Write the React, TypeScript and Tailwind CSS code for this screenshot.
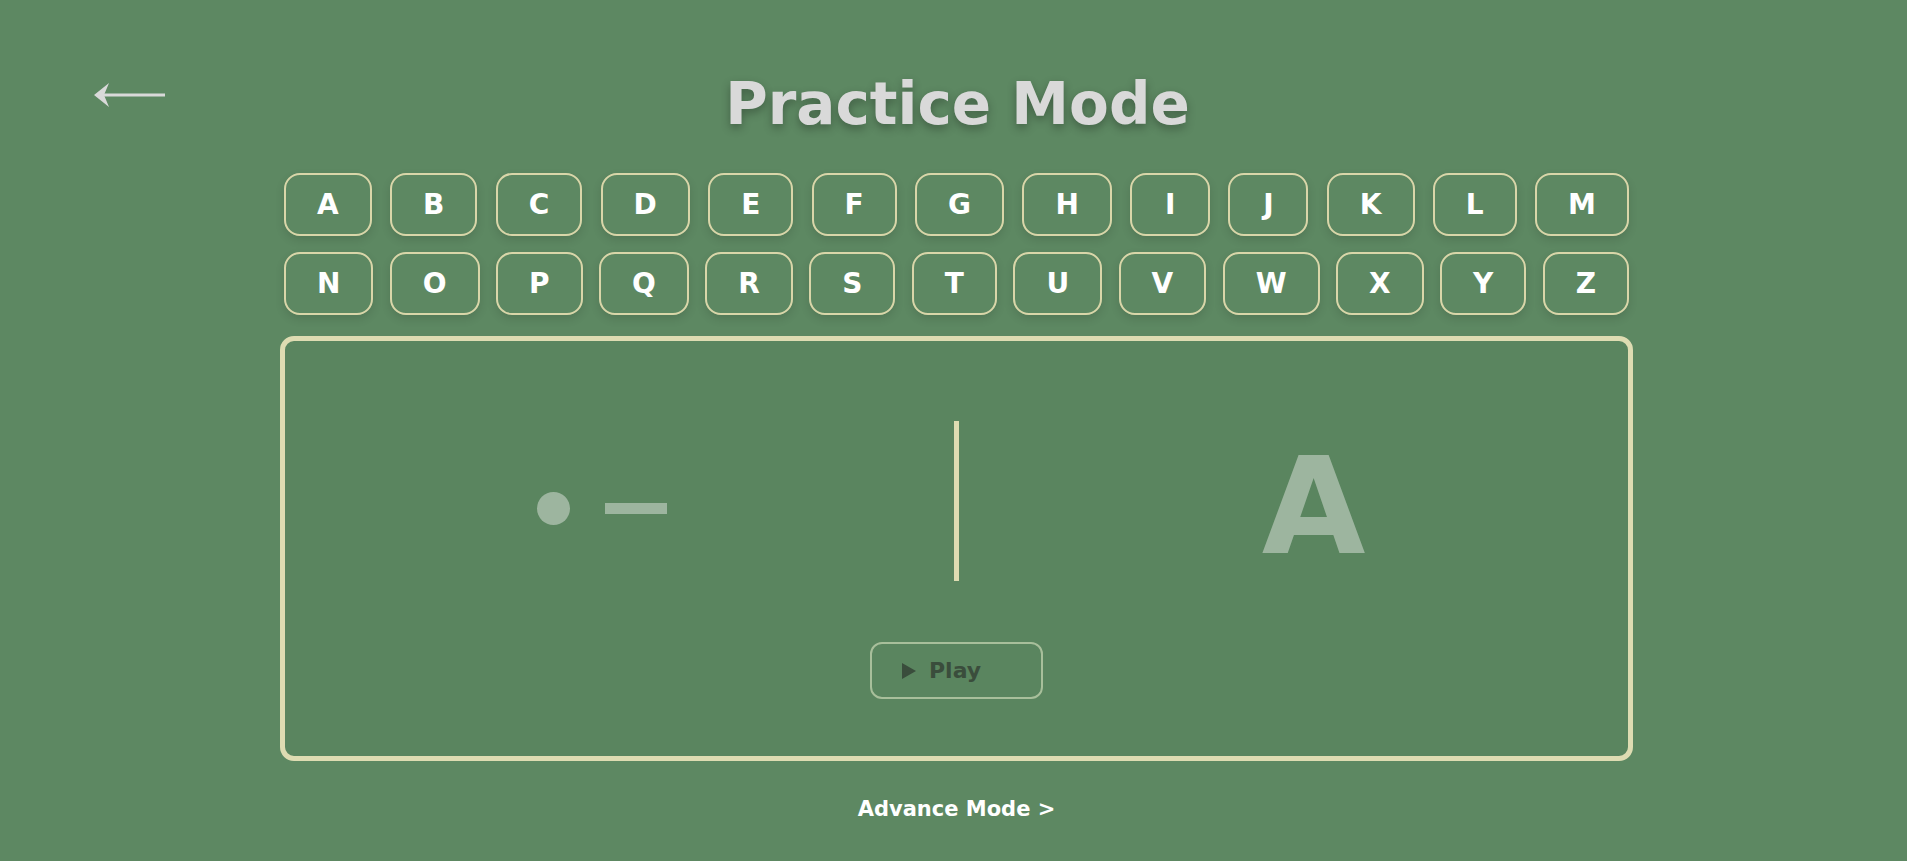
const ROW1 = ["A", "B", "C", "D", "E", "F", "G", "H", "I", "J", "K", "L", "M"];
const ROW2 = ["N", "O", "P", "Q", "R", "S", "T", "U", "V", "W", "X", "Y", "Z"];

function LetterKey({ letter }: { letter: string }) {
  return (
    <button className="h-[63px] min-w-[80px] px-[31px] flex items-center justify-center rounded-[16px] border-2 border-[#d9d6a9] text-white text-[28px] font-bold leading-none shadow-[0_4px_10px_rgba(0,0,0,0.12)]">
      {letter}
    </button>
  );
}

export default function App() {
  return (
    <div
      className="min-h-screen bg-[#5d8862] pb-10"
      style={{ fontFamily: '"DejaVu Sans", "Noto Sans", sans-serif' }}
    >
      {/* header */}
      <div className="grid grid-cols-[1fr_auto_1fr] pt-[75px]">
        <div className="pl-[94px] pt-[7px]">
          <svg width="72" height="26" viewBox="0 0 72 26" fill="none">
            <path d="M4 13 H71" stroke="#d9d9d9" strokeWidth="3" />
            <path d="M0 13 L15 1 L10 13 L15 25 Z" fill="#d9d9d9" />
          </svg>
        </div>
        <h1 className="translate-x-[4px] text-[58px] leading-none font-bold text-[#d9d9d9] [text-shadow:0_4px_10px_rgba(0,0,0,0.3)]">
          Practice Mode
        </h1>
        <div />
      </div>

      <div className="mx-auto w-[1353px] translate-x-[3px] mt-[40px]">
        {/* letter keys */}
        <div className="px-[4px] space-y-[16px]">
          <div className="flex justify-between">
            {ROW1.map((l) => (
              <LetterKey key={l} letter={l} />
            ))}
          </div>
          <div className="flex justify-between">
            {ROW2.map((l) => (
              <LetterKey key={l} letter={l} />
            ))}
          </div>
        </div>

        {/* practice card */}
        <div className="mt-[21px] h-[425px] rounded-[14px] border-[5px] border-[#dedcb2] bg-[#5a855f] flex flex-col items-center pt-[80px]">
          <div className="w-full flex items-center">
            <div className="flex-1 flex items-center justify-center gap-[35px] pl-[2px] pr-[38px] pt-[14px]">
              <span className="w-[33px] h-[33px] rounded-full bg-[#9db59f]" />
              <span className="w-[62px] h-[11px] bg-[#9db59f]" />
            </div>
            <div className="w-[5px] h-[160px] bg-[#dedcb2]" />
            <div className="flex-1 flex items-center justify-center pl-[40px] pt-[12px]">
              <span className="text-[134px] leading-none font-bold text-[#9db59f]">A</span>
            </div>
          </div>

          <button className="mt-[61px] w-[173px] h-[57px] rounded-[12px] border-2 border-[#a8bf9b] flex items-center pl-[30px] gap-[13px] text-[#3a4d3c] text-[22px] font-bold">
            <svg width="14" height="16" viewBox="0 0 14 16">
              <polygon points="0,0 14,8 0,16" fill="#3a4d3c" />
            </svg>
            Play
          </button>
        </div>

        <div className="mt-[38px] text-center text-white text-[21px] font-bold leading-none">
          Advance Mode &gt;
        </div>
      </div>
    </div>
  );
}
